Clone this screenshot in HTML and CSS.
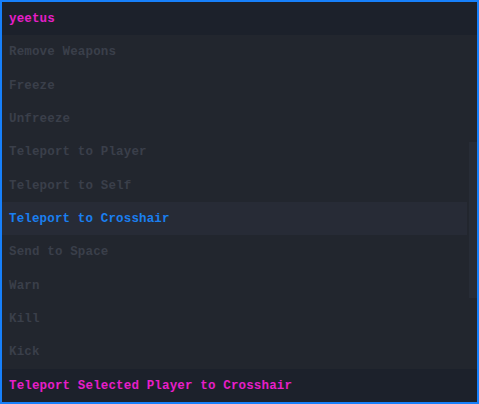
FILE: index.html
```html
<!DOCTYPE html>
<html lang="en">

<head>
    <meta charset="UTF-8">
    <meta name="viewport" content="width=device-width, initial-scale=1.0">
    <title>Menu</title>
    <link rel="stylesheet" href="styles.css">
</head>

<body>
    <div class="menu">
        <div class="title">yeetus</div>
        <div class="list">
            <div class="items">
                <div class="item">Remove Weapons</div>
                <div class="item">Freeze</div>
                <div class="item">Unfreeze</div>
                <div class="item">Teleport to Player</div>
                <div class="item">Teleport to Self</div>
                <div class="item active">Teleport to Crosshair</div>
                <div class="item">Send to Space</div>
                <div class="item">Warn</div>
                <div class="item">Kill</div>
                <div class="item">Kick</div>
            </div>
            <div class="scroll">
                <div class="thumb"></div>
            </div>
        </div>
        <div class="desc">Teleport Selected Player to Crosshair</div>
    </div>
</body>

</html>
```

FILE: styles.css
```css
html,
body {
    width: 100%;
    height: 100%;
    margin: 0;
    padding: 0;
    background-color: #22262e;
    font-family: "Liberation Mono", "DejaVu Sans Mono", monospace;
    font-size: 12.5px;
    font-weight: bold;
    letter-spacing: 0.15px;
}

.menu {
    box-sizing: border-box;
    width: 479px;
    height: 404px;
    border: solid 2px #1780fb;
    display: flex;
    flex-direction: column;
    background-color: #22262e;
}

.title,
.desc,
.item {
    height: 33.33px;
    line-height: 34px;
    padding-left: 7px;
    white-space: nowrap;
}

.title,
.desc {
    background-color: #1c212b;
    color: #e61ec8;
}

.list {
    display: flex;
    flex: 1;
}

.items {
    flex: 1;
}

.item {
    color: #3a3f4a;
}

.item.active {
    background-color: #272b36;
    color: #1a7ff0;
}

.scroll {
    width: 10px;
    display: flex;
    flex-direction: column;
    padding-top: 107px;
    align-items: flex-end;
}

.thumb {
    width: 8px;
    height: 156px;
    background-color: #272c36;
}
```
